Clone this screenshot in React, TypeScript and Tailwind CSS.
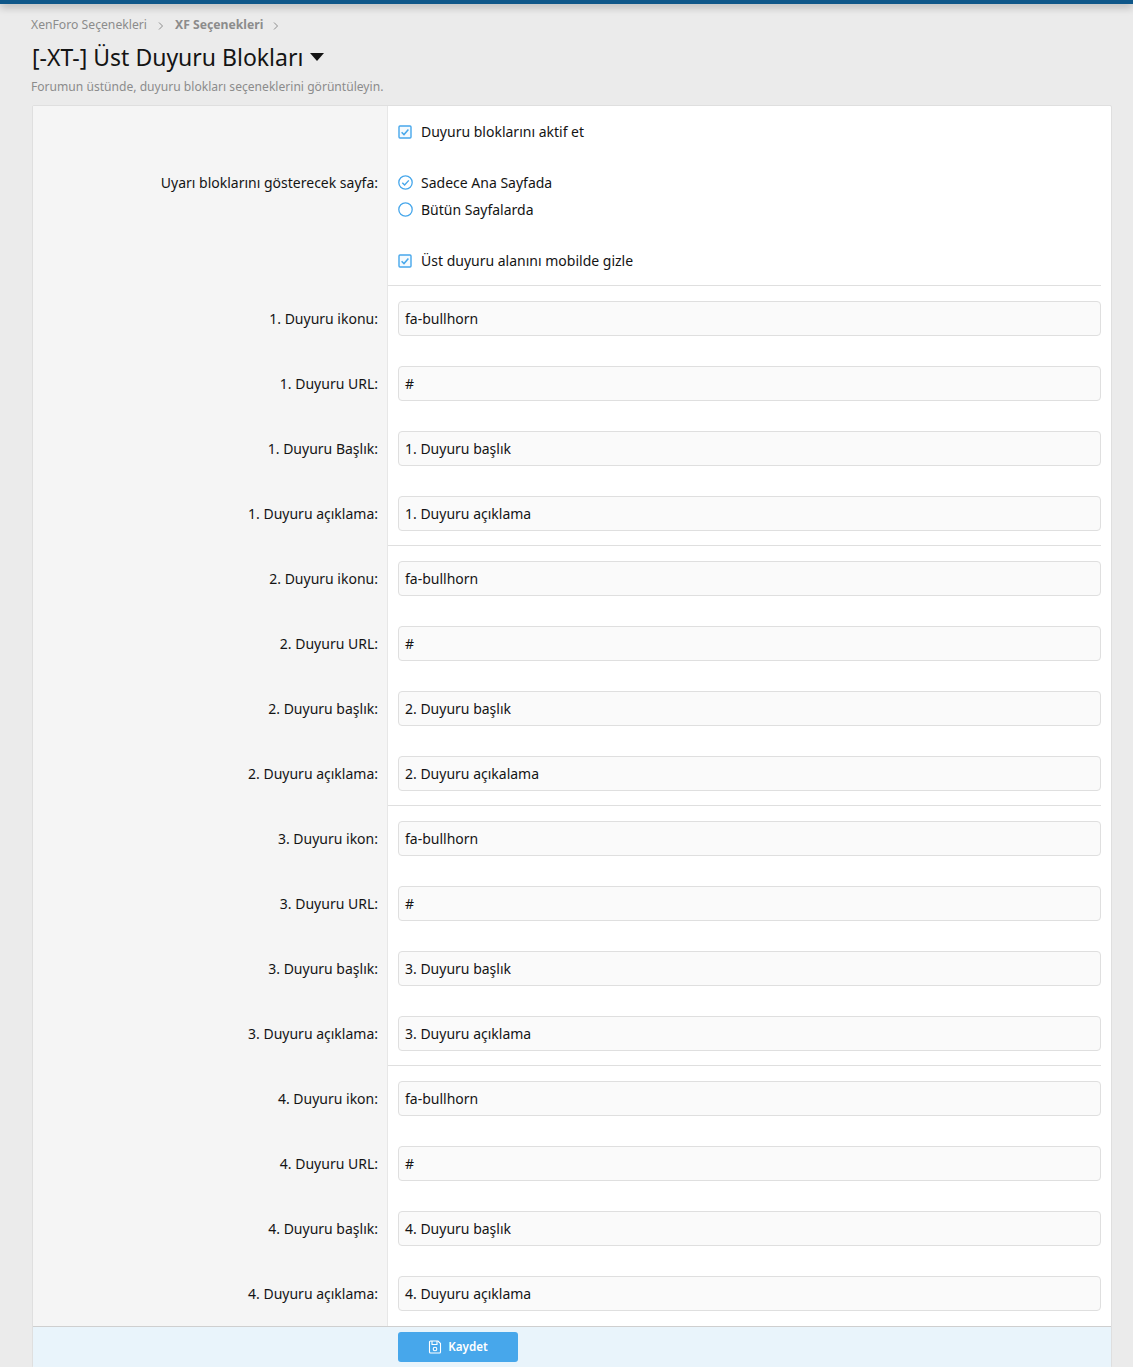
import React from 'react';

const groups = [
    [
        ['1. Duyuru ikonu:', 'fa-bullhorn'],
        ['1. Duyuru URL:', '#'],
        ['1. Duyuru Başlık:', '1. Duyuru başlık'],
        ['1. Duyuru açıklama:', '1. Duyuru açıklama'],
    ],
    [
        ['2. Duyuru ikonu:', 'fa-bullhorn'],
        ['2. Duyuru URL:', '#'],
        ['2. Duyuru başlık:', '2. Duyuru başlık'],
        ['2. Duyuru açıklama:', '2. Duyuru açıkalama'],
    ],
    [
        ['3. Duyuru ikon:', 'fa-bullhorn'],
        ['3. Duyuru URL:', '#'],
        ['3. Duyuru başlık:', '3. Duyuru başlık'],
        ['3. Duyuru açıklama:', '3. Duyuru açıklama'],
    ],
    [
        ['4. Duyuru ikon:', 'fa-bullhorn'],
        ['4. Duyuru URL:', '#'],
        ['4. Duyuru başlık:', '4. Duyuru başlık'],
        ['4. Duyuru açıklama:', '4. Duyuru açıklama'],
    ],
];

function CheckBox() {
    return (
        <svg width="14" height="14" viewBox="0 0 14 14" className="shrink-0">
            <rect x="1" y="1" width="12" height="12" rx="1" fill="#f4fafe" stroke="#47a7eb" strokeWidth="1.4" />
            <path d="M3.6 7.2 L6 9.6 L10.4 4.6" fill="none" stroke="#47a7eb" strokeWidth="1.5" />
        </svg>
    );
}

function Radio({ checked }: { checked?: boolean }) {
    return (
        <svg width="15" height="15" viewBox="0 0 15 15" className="shrink-0">
            <circle cx="7.5" cy="7.5" r="6.7" fill="none" stroke="#47a7eb" strokeWidth="1.3" />
            {checked && <path d="M4.3 7.7 L6.6 10 L10.8 5.4" fill="none" stroke="#47a7eb" strokeWidth="1.4" />}
        </svg>
    );
}

function Row({ label, children, className }: { label?: string; children: React.ReactNode; className?: string }) {
    return (
        <div className="flex">
            <div className="w-[355px] shrink-0 bg-[#f5f5f5] border-r border-[#e7e7e7] pr-[9px] text-right text-[#141414]">
                {label && <div className="pt-[22px] leading-[21px]">{label}</div>}
            </div>
            <div className={className}>{children}</div>
        </div>
    );
}

function App() {
    return (
        <div className="relative h-[1367px] overflow-hidden bg-[#ebebeb] text-[14px] text-[#141414] font-['Noto_Sans','Open_Sans',sans-serif]">
            <div className="h-[4px] bg-[#0f5789] shadow-[0_2px_8px_rgba(0,0,0,0.4)]" />
            <div className="pt-[12px] pl-[31px] pr-[21px]">
                <div className="flex items-center h-[19px] text-[12.2px] text-[#8c8c8c]">
                    <span>XenForo Seçenekleri</span>
                    <svg width="6" height="8" viewBox="0 0 6 8" fill="none" stroke="#8c8c8c" strokeWidth="1" className="mx-[11px]">
                        <path d="M1 0.5 L4.5 4 L1 7.5" />
                    </svg>
                    <span className="font-bold">XF Seçenekleri</span>
                    <svg width="6" height="8" viewBox="0 0 6 8" fill="none" stroke="#8c8c8c" strokeWidth="1" className="ml-[10px]">
                        <path d="M1 0.5 L4.5 4 L1 7.5" />
                    </svg>
                </div>
                <h1 className="mt-[6px] flex items-center h-[32px] text-[23px] font-normal leading-[32px] pl-px">
                    [-XT-] Üst Duyuru Blokları
                    <svg width="14" height="8" viewBox="0 0 14 8" className="ml-[7px]">
                        <path d="M0 0 H14 L7 8 Z" fill="#141414" />
                    </svg>
                </h1>
                <p className="mt-[4px] h-[20px] text-[12.1px] leading-[20px] text-[#8c8c8c]">
                    Forumun üstünde, duyuru blokları seçeneklerini görüntüleyin.
                </p>
                <div className="mt-[8px] ml-px border border-[#dfdfdf] rounded-[2px] bg-white overflow-hidden">
                    <div className="flex">
                        <div className="w-[355px] shrink-0 bg-[#f5f5f5] border-r border-[#e7e7e7] pr-[9px] text-right">
                            <div className="pt-[66px] leading-[21px]">Uyarı bloklarını gösterecek sayfa:</div>
                        </div>
                        <div className="grow mr-[10px] h-[180px] border-b border-[#dfdfdf] pl-[10px] pt-[15px]">
                            <label className="flex items-center gap-[9px] h-[21px]"><CheckBox />Duyuru bloklarını aktif et</label>
                            <div className="mt-[30px] flex items-center gap-[8px] h-[21px]"><Radio checked />Sadece Ana Sayfada</div>
                            <div className="mt-[6px] flex items-center gap-[8px] h-[21px]"><Radio />Bütün Sayfalarda</div>
                            <label className="mt-[30px] flex items-center gap-[9px] h-[21px]"><CheckBox />Üst duyuru alanını mobilde gizle</label>
                        </div>
                    </div>
                    {groups.map((rows, g) =>
                        rows.map(([label, value], i) => (
                            <Row key={label} label={label} className={`grow mr-[10px] h-[65px] pl-[10px] pt-[15px] ${i === 3 && g < 3 ? 'border-b border-[#dfdfdf]' : ''}`}>
                                <div className="h-[35px] border border-[#dfdfdf] rounded-[4px] bg-[#fafafa] px-[6px] leading-[33px]">{value}</div>
                            </Row>
                        ))
                    )}
                    <div className="flex h-[41px] border-t border-[#cfcfcf] bg-[#e9f4fb] pl-[365px] pt-[5px]">
                        <button className="flex items-center justify-center gap-[6px] w-[120px] h-[30px] rounded-[3px] bg-[#47a7eb] text-white text-[11.6px] font-semibold">
                            <svg width="14" height="14" viewBox="0 0 14 14" fill="none" stroke="white" strokeWidth="1.1">
                                <path d="M1.5 2 a1 1 0 0 1 1-1 H10 L12.5 3.5 V12 a1 1 0 0 1-1 1 H2.5 a1 1 0 0 1-1-1 Z" />
                                <path d="M4 1 V4.5 H9 V1" />
                                <circle cx="7" cy="9" r="1.8" />
                            </svg>
                            Kaydet
                        </button>
                    </div>
                </div>
            </div>
        </div>
    );
}

export default App;
